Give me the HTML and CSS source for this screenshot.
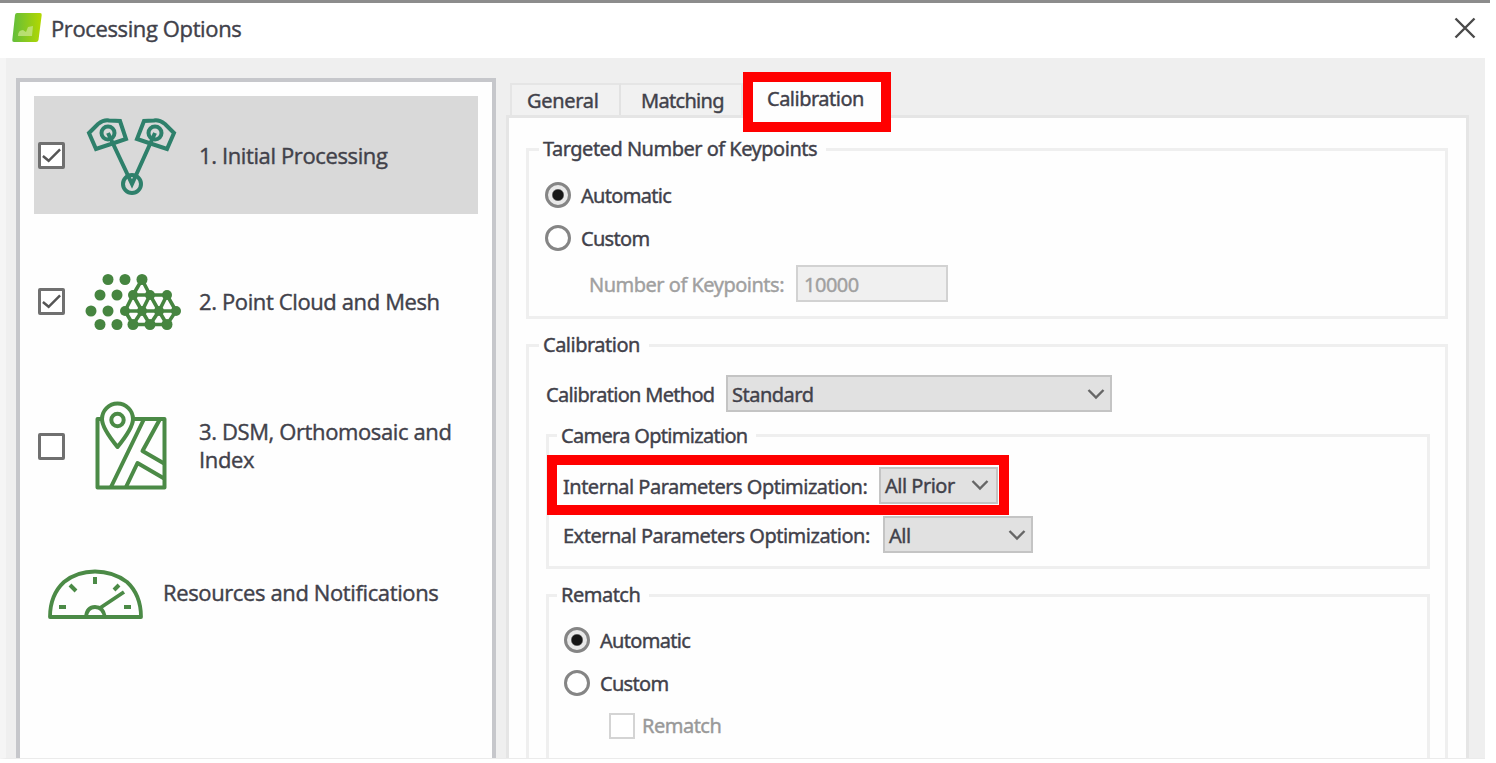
FILE: index.html
```html
<!DOCTYPE html>
<html lang="en">
<head>
<meta charset="utf-8">
<title>Processing Options</title>
<link rel="stylesheet" href="styles.css">
</head>
<body>
<div class="window">
  <header class="titlebar">
    <svg class="logo" width="32" height="32" viewBox="0 0 32 32">
      <defs><linearGradient id="lg" x1="0" y1="0" x2="1" y2="0"><stop offset="0" stop-color="#62bd3c"/><stop offset="1" stop-color="#b4d800"/></linearGradient></defs>
      <path d="M6 1H29Q31 1 30.700 3L27.500 28Q27 30 25 30H3Q1 30 1.300 28L4 3Q4.300 1 6 1Z" fill="url(#lg)"/>
      <path d="M7 24Q7 18 12 18L15 20 17 15 22 14 21 24Z" fill="#c9e68c" opacity=".75"/>
    </svg>
    <h1 class="title">Processing Options</h1>
    <svg class="close" width="22" height="22" viewBox="0 0 22 22"><path d="M1.500 1.500 20.500 20.500M20.500 1.500 1.500 20.500" fill="none" stroke="#4a4a4a" stroke-width="2.400"/></svg>
  </header>
  <main class="body">
    <nav class="steps">
      <div class="step selected">
        <span class="check"><svg width="22" height="22" viewBox="0 0 22 22"><path d="M2 11 8 16 20 4" fill="none" stroke="#555" stroke-width="2.600"/></svg></span>
        <svg class="icon" width="96" height="80" viewBox="84 116 96 80" fill="none" stroke="#2e806b" stroke-width="4">
          <path d="M89 134 98 125Q104 120.500 109 121.500L120 122 126 140 114 144 96 150 89 134Z"/>
          <path d="M174 134 165 125Q159 120.500 154 121.500L144 122 137 140 149 144 167 150 174 134Z"/>
          <circle cx="108" cy="134" r="6.500"/><circle cx="155" cy="134" r="6.500"/>
          <path d="M108 134 132 185 155 134"/><circle cx="132" cy="185" r="9"/>
        </svg>
        <span class="label">1. Initial Processing</span>
      </div>
      <div class="step mesh">
        <span class="check"><svg width="22" height="22" viewBox="0 0 22 22"><path d="M2 11 8 16 20 4" fill="none" stroke="#555" stroke-width="2.600"/></svg></span>
        <svg class="icon" width="98" height="64" viewBox="84 269 98 64">
          <g fill="#468540">
            <circle cx="108" cy="279.500" r="5.500"/><circle cx="125" cy="279.500" r="5.500"/><circle cx="142" cy="279.500" r="5.500"/>
            <circle cx="100" cy="295" r="5.500"/><circle cx="117" cy="295" r="5.500"/><circle cx="133" cy="295" r="5"/><circle cx="150" cy="295" r="5"/><circle cx="167" cy="295" r="5"/>
            <circle cx="91" cy="311" r="5.500"/><circle cx="108" cy="311" r="5.500"/><circle cx="125" cy="311" r="5"/><circle cx="142" cy="311" r="5"/><circle cx="159" cy="311" r="5"/><circle cx="176" cy="311" r="5"/>
            <circle cx="100" cy="324.500" r="5.500"/><circle cx="117" cy="324.500" r="5.500"/><circle cx="133" cy="324.500" r="5.500"/><circle cx="150" cy="324.500" r="5.500"/><circle cx="167" cy="324.500" r="5.500"/>
          </g>
          <path d="M142 279.500 133 295H167L176 311 167 324.500H133L125 311H176M142 279.500 150 295 159 311 167 324.500M125 311 133 295 142 311 150 324.500 159 311 167 295M133 324.500 142 311 150 295" fill="none" stroke="#468540" stroke-width="3.600"/>
        </svg>
        <span class="label">2. Point Cloud and Mesh</span>
      </div>
      <div class="step dsm">
        <span class="check"></span>
        <svg class="icon" width="96" height="92" viewBox="84 398 96 92" fill="none" stroke="#4b8a46" stroke-width="4" stroke-linejoin="round">
          <path d="M101 418H97.500V486.500H164.500V418H133"/>
          <path d="M117.500 446Q102 427 102 418A15.500 15.500 0 0 1 133 418Q133 427 117.500 446Z"/>
          <circle cx="117.500" cy="419" r="6.200"/>
          <path d="M144 418 111 486M160 418 142.500 450 165 463M126 486 137.500 462 165 478"/>
        </svg>
        <span class="label">3. DSM, Orthomosaic and<br>Index</span>
      </div>
      <div class="step resources">
        <svg width="98" height="54" viewBox="46 567 98 54" fill="none" stroke="#4b8a46" stroke-width="3.800" stroke-linejoin="round">
          <path d="M50 617Q50 595 64 582 77 571.500 95 571.500 113 571.500 127 582 141 595 141 617Z"/>
          <path d="M95 577V584M70 585 76 591M119 585 114 590M59 607H66M124 607H131" stroke-width="4"/>
          <path d="M86 617Q87 607 95 607 103 607 105 617M100 608 124 592"/>
        </svg>
        <span class="label">Resources and Notifications</span>
      </div>
    </nav>
    <section class="tabs">
      <div class="tabbar">
        <span class="tab general">General</span>
        <span class="tab matching">Matching</span>
        <span class="tab active">Calibration</span>
      </div>
      <div class="page">
        <fieldset class="keypoints">
          <legend>Targeted Number of Keypoints</legend>
          <label class="row"><span class="radio on"></span><span class="choice">Automatic</span></label>
          <label class="row"><span class="radio"></span><span class="choice">Custom</span></label>
          <div class="row count"><span class="count-label">Number of Keypoints:</span><span class="field">10000</span></div>
        </fieldset>
        <fieldset class="calibration">
          <legend>Calibration</legend>
          <div class="row method"><span class="method-label">Calibration Method</span><span class="select standard"><span>Standard</span><svg width="18" height="12" viewBox="0 0 18 12"><path d="M1.500 2 9 9.500 16.500 2"/></svg></span></div>
          <fieldset class="camera">
            <legend>Camera Optimization</legend>
            <div class="row param internal"><span class="internal-label">Internal Parameters Optimization:</span><span class="select prior"><span>All Prior</span><svg width="18" height="12" viewBox="0 0 18 12"><path d="M1.500 2 9 9.500 16.500 2"/></svg></span></div>
            <div class="row param external"><span class="external-label">External Parameters Optimization:</span><span class="select all"><span>All</span><svg width="18" height="12" viewBox="0 0 18 12"><path d="M1.500 2 9 9.500 16.500 2"/></svg></span></div>
          </fieldset>
          <fieldset class="rematch">
            <legend>Rematch</legend>
            <label class="row"><span class="radio on"></span><span class="choice">Automatic</span></label>
            <label class="row"><span class="radio"></span><span class="choice">Custom</span></label>
            <label class="row disabled"><span class="box"></span>Rematch</label>
          </fieldset>
        </fieldset>
      </div>
    </section>
  </main>
</div>
</body>
</html>
```
FILE: styles.css
```css
* { box-sizing: border-box; }
body { margin: 0; background: #fff; overflow: hidden; }
.window { width: 1496px; height: 763px; padding-right: 11px; font-family: "Open Sans", sans-serif; font-size: 22px; letter-spacing: -.38px; color: #41414a; white-space: nowrap; }
.titlebar { height: 58px; width: 1490px; border-top: 3px solid #8c8c8c; display: flex; align-items: center; padding: 0 14px 5px 11px; }
.title { margin: 0 auto 0 8px; font-size: 22px; font-weight: 400; line-height: 30px; -webkit-text-stroke: .4px; }
.close { flex: none; }

.body { display: flex; height: 701px; background: #efefef; border-left: 6px solid #f5f5f5; border-bottom: 1px solid #ebebeb; padding: 20px 16px 0 10px; overflow: hidden; }
.steps { width: 480px; height: 700px; border: 4px solid #c6c7cb; border-bottom: 0; background: #fefefe; padding: 14px; }
.step { height: 118px; display: flex; align-items: center; padding-left: 4px; line-height: 28px; -webkit-text-stroke: .4px; }
.step.selected { background: #d9d9d9; }
.mesh { margin-top: 28px; }
.dsm { margin-top: 26px; }
.dsm .label { padding-bottom: 1px; }
.check { width: 27px; height: 27px; border: 3px solid #707070; border-radius: 2px; background: #fff; flex: none; display: flex; margin-top: 1px; }
.dsm .check { margin-top: 3px; }
.step .icon { margin: 0 19px; flex: none; }
.mesh .icon { margin-right: 17px; }
.resources { margin-top: 31px; padding-left: 12px; gap: 19px; }
.resources .label { padding-bottom: 4px; }

.tabs { width: 963px; margin-left: 10px; padding-top: 5px; font-family: "Noto Sans", sans-serif; letter-spacing: -.5px; }
.tabbar { display: flex; height: 32px; padding-left: 4px; font-size: 20px; line-height: 31px; -webkit-text-stroke: .4px; }
.tab { height: 32px; border-top: 2px solid #e5e5e5; border-right: 2px solid #e2e2e2; background: #f1f1f1; }
.general { width: 111px; padding-left: 15px; border-left: 2px solid #e5e5e5; letter-spacing: -.3px; }
.matching { width: 122px; padding-left: 20px; letter-spacing: -.7px; }
.tab.active { position: relative; z-index: 1; width: 148px; height: 60px; margin-top: -11px; border: 10px solid #f00; background: #fefefe; padding-left: 14px; line-height: 34px; }
.page { height: 650px; border: 3px solid #e5e5e5; background: #fefefe; padding: 17px 18px 0 17px; font-size: 20px; -webkit-text-stroke: .4px; }

fieldset { margin: 0; min-width: 0; border: 3px solid #efefef; padding: 0; }
legend { line-height: 28px; height: 28px; padding: 0 9px 0 4px; margin-left: 10px; }
.row { display: flex; align-items: center; height: 43px; line-height: 28px; }
.radio { width: 26px; height: 26px; border: 3px solid #858585; border-radius: 50%; background: #fff; margin-right: 10px; flex: none; }
.radio.on { background: radial-gradient(circle, #161616 5px, #e9e9e9 6.500px); }
.choice { padding-top: 2px; letter-spacing: -.7px; }
.keypoints { height: 184px; }
.keypoints > .row { margin-left: 16px; }
.keypoints > legend + .row { margin-top: 10px; }
.keypoints .count { margin-left: 60px; height: 48px; color: #a0a0a0; }
.count-label { width: 207px; padding-top: 4px; }
.field { width: 152px; height: 37px; border: 2px solid #d2d2d2; background: #f0f0f0; padding-left: 6px; line-height: 35px; }
.calibration { margin-top: 12px; height: 500px; padding: 0 15px 0 17px; }
.calibration > legend { margin-left: -7px; }
.method { margin-top: 13px; }
.method-label { width: 180px; padding-top: 3px; letter-spacing: -.7px; }
.select { display: flex; align-items: center; justify-content: space-between; height: 37px; border: 2px solid #c4c4c4; background: #e1e1e1; padding: 0 5px 0 4px; }
.select span { padding-top: 2px; }
.select svg { fill: none; stroke: #666; stroke-width: 2.400; }
.standard { width: 386px; }
.camera { height: 148px; margin-top: 6px; }
.camera > legend, .rematch > legend { margin-left: 8px; }
.camera > legend { padding-top: 1px; letter-spacing: -.7px; }
.internal { position: relative; z-index: 1; width: 462px; height: 60px; border: 10px solid #f00; margin: 6px 0 0 -2px; padding-left: 6px; }
.internal-label { width: 316px; padding-top: 3px; }
.prior { width: 119px; padding-right: 7px; }
.external { height: 39px; padding-left: 14px; }
.external-label { width: 320px; padding-top: 2px; }
.all { width: 150px; }
.rematch { height: 200px; margin-top: 12px; }
.rematch > .row { margin-left: 15px; }
.rematch > legend + .row { margin-top: 9px; }
.rematch .disabled { margin-left: 60px; color: #999; }
.box { width: 26px; height: 26px; border: 2px solid #d4d4d4; background: #fff; margin-right: 7px; }
```
